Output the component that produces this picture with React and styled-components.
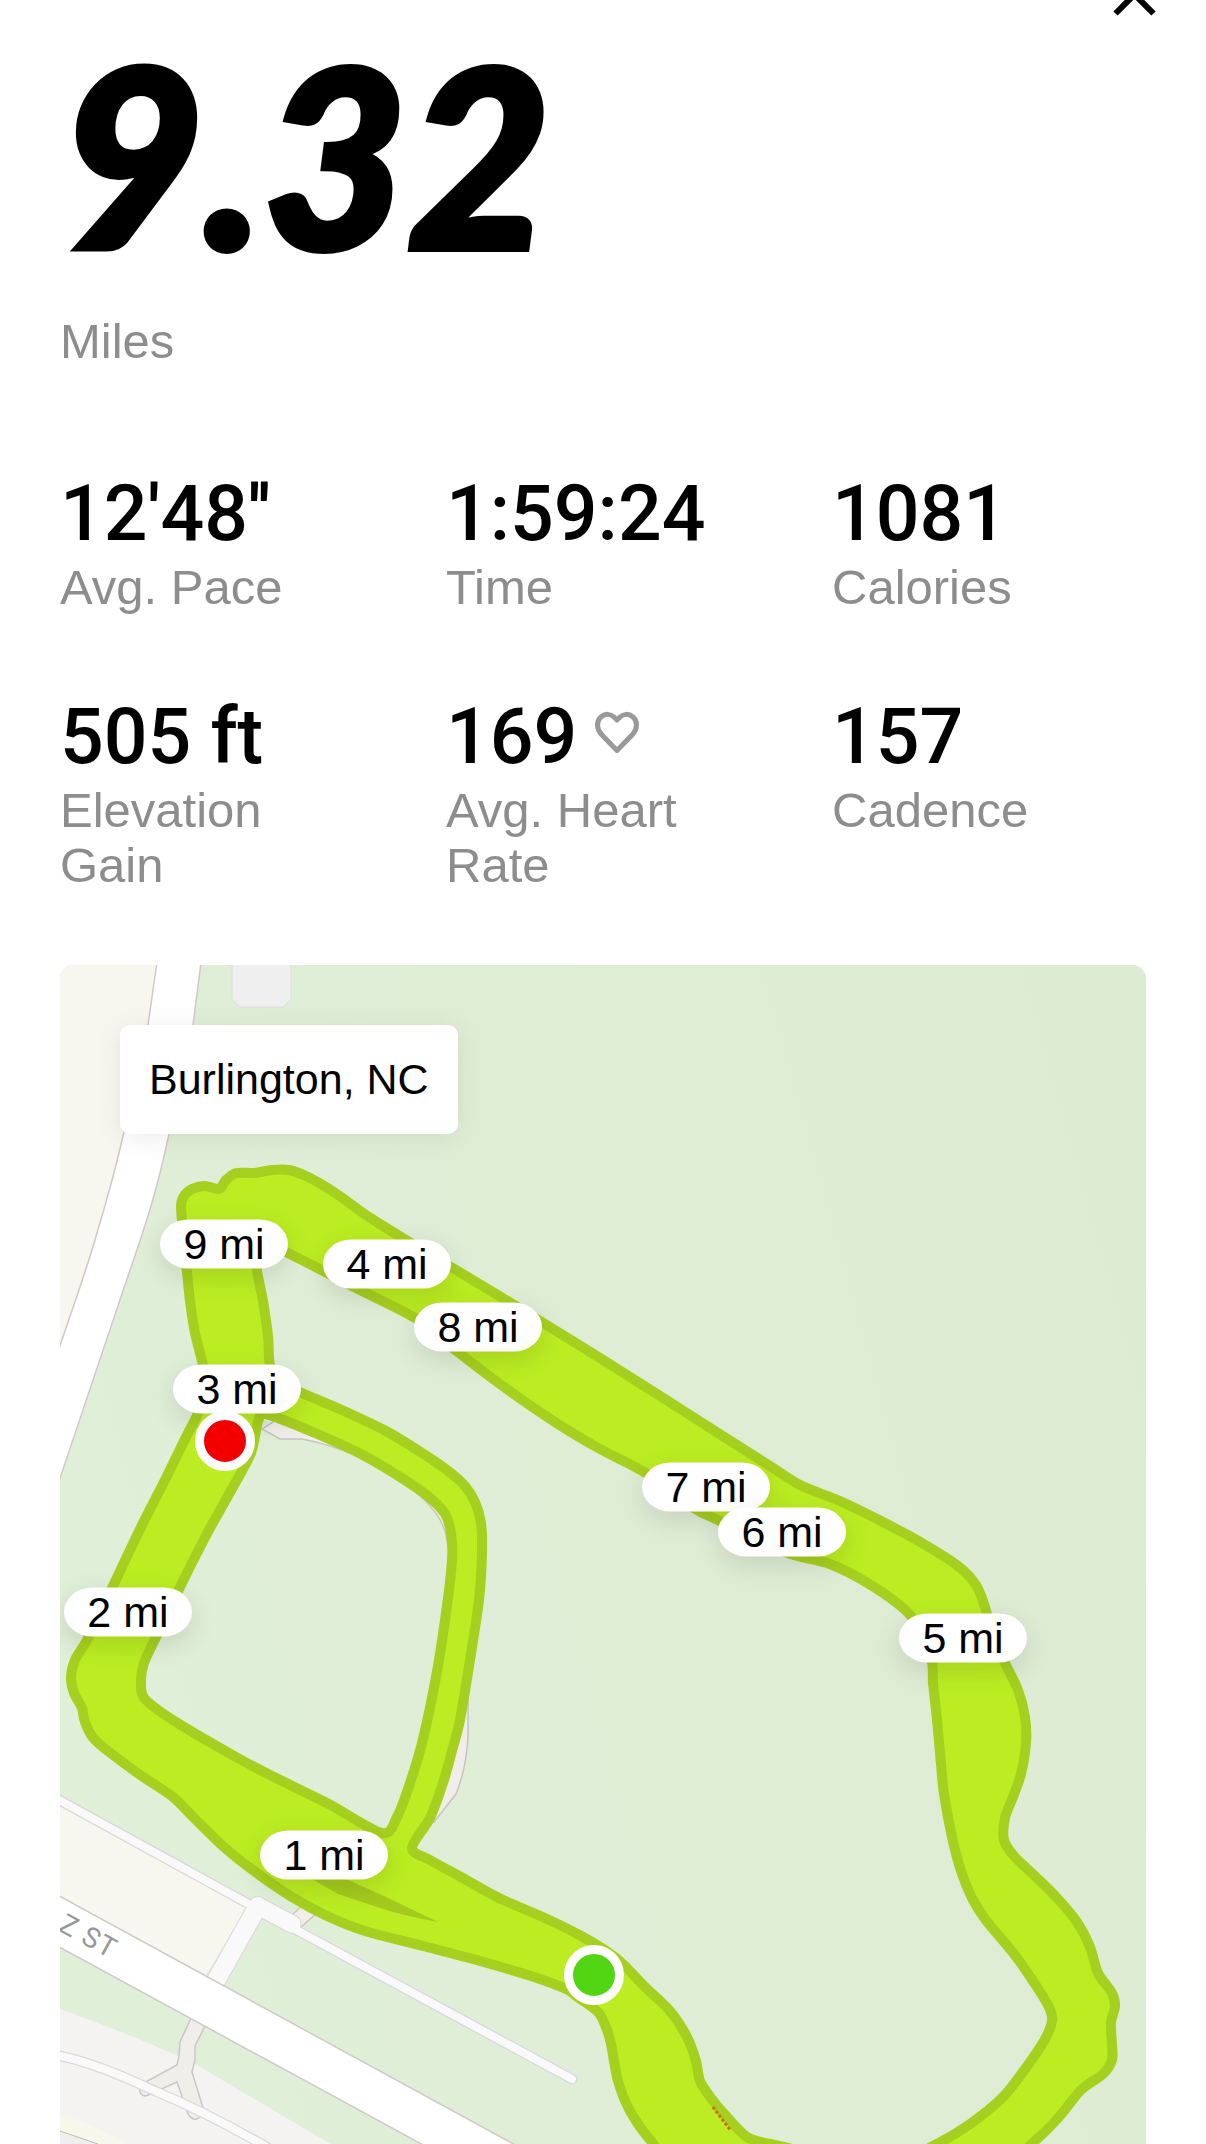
import React from "react";
import styled, { createGlobalStyle } from "styled-components";

const GlobalStyle = createGlobalStyle`
  *, *::before, *::after { box-sizing: border-box; }
  body {
    margin: 0;
    background: #fff;
    color: #000;
    font-family: "Liberation Sans", Helvetica, Arial, sans-serif;
    overflow-x: hidden;
  }
`;

const Page = styled.main`
  padding: 0 60px;
`;

const Header = styled.header`
  display: flex;
  justify-content: flex-end;
  align-items: flex-end;
  height: 24px;
  margin-right: -18px;
`;

const CloseButton = styled.button`
  flex: none;
  display: block;
  width: 60px;
  height: 60px;
  padding: 0;
  border: 0;
  background: none;
  color: #000;

  svg { display: block; }
`;

const Distance = styled.h1`
  margin: 0;
  font-family: Lato, "Liberation Sans", sans-serif;
  font-size: 248px;
  font-weight: 900;
  font-style: italic;
  line-height: 258px;
  -webkit-text-stroke: 6px #000;
`;

const Unit = styled.p`
  margin: 32px 0 0;
  font-size: 49px;
  line-height: 55px;
  color: #8d8d8d;
`;

const Stats = styled.dl`
  display: grid;
  grid-template-columns: repeat(3, minmax(0, 1fr));
  gap: 80px 72px;
  margin: 103px 0 0;
`;

const Stat = styled.div`
  display: flex;
  flex-direction: column-reverse;
  justify-content: flex-end;
  gap: 4px;
`;

const StatLabel = styled.dt`
  font-size: 49px;
  line-height: 55px;
  color: #8d8d8d;
`;

const StatValue = styled.dd`
  display: flex;
  align-items: center;
  gap: 16px;
  margin: 0;
  font-family: Roboto, "Liberation Sans", sans-serif;
  font-size: 77px;
  font-weight: 500;
  line-height: 84px;
  white-space: nowrap;
`;

const MapCard = styled.section`
  position: relative;
  aspect-ratio: 1086 / 1179;
  margin-top: 72px;
  border-radius: 14px 14px 0 0;
  overflow: hidden;
  background: #e0eed7;
`;

const MapDrawing = styled.svg`
  display: block;
  width: 100%;
  height: 100%;
`;

const PlaceChip = styled.div`
  position: absolute;
  top: 60px;
  left: 60px;
  padding: 27px 29px;
  border-radius: 10px;
  background: #fff;
  box-shadow: 0 4px 28px rgba(0, 0, 0, 0.08);
  font-size: 43px;
  line-height: 55px;
`;

const Marker = styled.span`
  position: absolute;
  left: ${(p) => ((p.$x - 60) / 1086) * 100}%;
  top: ${(p) => ((p.$y - 965) / 1179) * 100}%;
  transform: translate(-50%, -50%);
`;

const MilePin = styled(Marker)`
  width: 128px;
  height: 49px;
  border-radius: 29px / 25px;
  background: #fff;
  box-shadow: 0 8px 28px rgba(0, 0, 0, 0.12);
  font-size: 43px;
  line-height: 49px;
  text-align: center;
  white-space: nowrap;
`;

const EndPoint = styled(Marker)`
  width: 60px;
  height: 60px;
  border: 9px solid #fff;
  border-radius: 50%;
  background: ${(p) => p.$color};
`;

const stats = [
  { label: "Avg. Pace", value: "12'48''" },
  { label: "Time", value: "1:59:24" },
  { label: "Calories", value: "1081" },
  { label: "Elevation Gain", value: "505 ft" },
  { label: "Avg. Heart Rate", value: "169", heart: true },
  { label: "Cadence", value: "157" },
];

const pins = [
  { mile: 9, x: 224, y: 1244 },
  { mile: 4, x: 387, y: 1264 },
  { mile: 8, x: 478, y: 1327 },
  { mile: 3, x: 237, y: 1389 },
  { mile: 2, x: 128, y: 1612 },
  { mile: 1, x: 324, y: 1855 },
  { mile: 7, x: 706, y: 1487 },
  { mile: 6, x: 782, y: 1532 },
  { mile: 5, x: 963, y: 1638 },
];

const outerEdge = [
  [181, 1207], [184, 1196], [192, 1189], [205, 1186], [219, 1189], [226, 1180], [236, 1173],
  [254, 1173], [272, 1170], [289, 1170], [306, 1176], [326, 1187], [344, 1199], [369, 1217],
  [406, 1240], [451, 1267], [501, 1297], [540, 1321], [600, 1358], [668, 1401], [718, 1433],
  [770, 1466], [800, 1485], [840, 1501], [881, 1521], [922, 1543], [958, 1566], [976, 1585],
  [985, 1607], [992, 1633], [1005, 1663], [1018, 1690], [1025, 1717], [1026, 1743],
  [1021, 1774], [1013, 1797], [1005, 1818], [1004, 1840], [1014, 1856], [1036, 1877],
  [1058, 1899], [1077, 1922], [1090, 1947], [1098, 1973], [1112, 1993], [1115, 2006],
  [1111, 2023], [1112, 2044], [1112, 2060], [1103, 2074], [1081, 2090], [1059, 2117],
  [1037, 2139], [1010, 2160], [940, 2190], [700, 2190], [652, 2142], [630, 2111], [618, 2081],
  [611, 2044], [607, 2030], [598, 2012], [576, 1996], [566, 1989], [534, 1977], [480, 1961],
  [423, 1946], [365, 1931], [327, 1916], [292, 1897], [254, 1871], [224, 1847], [193, 1817],
  [173, 1797], [136, 1772], [96, 1741], [85, 1722], [82, 1708], [74, 1693], [71, 1677],
  [75, 1660], [87, 1640], [105, 1603], [122, 1567], [143, 1523], [165, 1480], [186, 1437],
  [198, 1413], [206, 1385], [202, 1361], [195, 1333], [190, 1301], [187, 1272], [184, 1240],
];

const courseInterior = [
  [256, 1240], [257, 1270], [263, 1301], [268, 1336], [270, 1365], [280, 1382], [302, 1393],
  [344, 1411], [386, 1431], [419, 1451], [447, 1470], [465, 1486], [475, 1502], [481, 1523],
  [482, 1553], [479, 1600], [470, 1660], [460, 1720], [452, 1751], [443, 1783], [430, 1818],
  [412, 1848], [430, 1860], [461, 1877], [499, 1898], [545, 1918], [583, 1937], [612, 1955],
  [628, 1969], [644, 1986], [670, 2011], [687, 2037], [696, 2061], [700, 2081], [711, 2098],
  [726, 2116], [747, 2137], [770, 2144], [850, 2160], [900, 2160], [937, 2144], [970, 2124],
  [1003, 2097], [1025, 2069], [1044, 2041], [1052, 2021], [1049, 2007], [1033, 1981],
  [1014, 1954], [985, 1919], [972, 1898], [961, 1871], [952, 1837], [944, 1794], [941, 1764],
  [937, 1720], [933, 1683], [931, 1658], [911, 1616], [874, 1587], [830, 1564], [785, 1552],
  [718, 1520], [694, 1508], [644, 1472], [600, 1449], [558, 1424], [504, 1387], [454, 1349],
  [415, 1318], [354, 1287], [290, 1254],
];

const innerLoop = [
  [266, 1414], [258, 1422], [251, 1453], [233, 1487], [209, 1530], [183, 1581], [158, 1633],
  [144, 1663], [141, 1683], [145, 1699], [176, 1722], [236, 1757], [270, 1775], [327, 1803],
  [382, 1833], [397, 1817], [409, 1786], [422, 1743], [436, 1677], [446, 1613], [452, 1560],
  [451, 1533], [445, 1514], [429, 1497], [397, 1475], [361, 1454], [315, 1433],
];

// Closed Catmull-Rom spline through the points, written as cubic segments.
function smooth(points) {
  const n = points.length;
  const at = (i) => points[(i + n) % n];
  let d = `M${at(0)}`;
  for (let i = 0; i < n; i += 1) {
    const [a, b, c, e] = [at(i - 1), at(i), at(i + 1), at(i + 2)];
    const c1 = [b[0] + (c[0] - a[0]) / 7, b[1] + (c[1] - a[1]) / 7];
    const c2 = [c[0] - (e[0] - b[0]) / 7, c[1] - (e[1] - b[1]) / 7];
    d += `C${c1} ${c2} ${c}`;
  }
  return `${d}Z`;
}

const routePath = smooth(outerEdge) + smooth(courseInterior) + smooth(innerLoop);

function CloseIcon() {
  return (
    <svg width="60" height="60" viewBox="0 0 60 60" fill="none" stroke="currentColor" strokeWidth="6" aria-hidden="true">
      <path d="M11.5 11.5 49.5 49.5M49.5 11.5 11.5 49.5" />
    </svg>
  );
}

function HeartIcon() {
  return (
    <svg width="48" height="48" viewBox="0 5 48 48" fill="none" stroke="#999" strokeWidth="5" strokeLinejoin="round" overflow="visible" aria-hidden="true">
      <path d="M24 42.500 8.500 26.500C3 20.500 3.500 12.500 8 9C12.500 5.200 17.500 5.800 21 9L24 12L27 9C30.500 5.800 35.500 5.200 40 9C44.500 12.500 45 20.500 39.500 26.500Z" />
    </svg>
  );
}

function CourseMap() {
  return (
    <MapDrawing viewBox="60 965 1086 1179" preserveAspectRatio="xMidYMin slice" role="img" aria-label="Route map">
      <defs>
        <linearGradient id="park" x1="0" y1="0.5" x2="1" y2="0.2">
          <stop offset="0" stopColor="#e0efd8" />
          <stop offset="1" stopColor="#deebd3" />
        </linearGradient>
      </defs>
      <rect x="60" y="965" width="1086" height="1179" fill="url(#park)" />

      {/* western road and the block beside it */}
      <path d="M60 965H157L148 1025L124 1132Q113 1176 97 1233L60 1346Z" fill="#f7f7ef" />
      <path
        d="M158 955L148 1025Q140 1070 124 1132Q113 1180 97 1233Q88 1266 50 1374V1508L128 1276Q142 1236 151 1206Q161 1172 169 1134Q184 1075 193 1025L202 955Z"
        fill="#fff" stroke="#cfcac6" strokeWidth="1.500"
      />
      <path d="M232 955V999L240 1007H283L291 999V955Z" fill="#efefef" stroke="#dededb" strokeWidth="1" />

      {/* footpath around the inner loop */}
      <path
        d="M262 1429L280 1439H302Q360 1450 408 1486Q441 1511 446 1535L468 1650V1737Q466 1770 456 1794L434 1822L400 1830L440 1760L468 1560L450 1480L300 1405Z"
        fill="#f1eeea" stroke="#c9c3c1" strokeWidth="1.500"
      />

      {/* blocks south of the course */}
      <path d="M60 1804L248 1906L206 1975L60 1897Z" fill="#f7f7ef" />
      <path d="M60 2009Q120 2030 178 2056L200 2067L346 2153H60Z" fill="#f4f3f2" />
      <path d="M60 2114Q100 2126 136 2150H60Z" fill="#f7f7ec" />
      <path d="M60 2131L98 2144V2150H55Z" fill="#efefee" stroke="#bbb" strokeWidth="1" />

      {/* paths */}
      <path
        d="M191 2018L180 2042L179 2056L177 2065L140 2085Q138 2096 146 2096L177 2082L188 2114Q196 2126 204 2111L192 2072L195 2060V2046L206 2024Z"
        fill="#efeee9" stroke="#cbc6c2" strokeWidth="1.500"
      />
      <path d="M292 1915L330 1880L340 1892L300 1928Z" fill="#f1eeea" stroke="#cbc6c2" strokeWidth="1.500" />
      <g fill="none" strokeLinecap="round" strokeLinejoin="round">
        <g stroke="#d9d7da" strokeWidth="10.500">
          <path d="M50 1795L254 1907L572 2079" />
          <path d="M50 2054Q90 2060 155 2091Q208 2113 270 2149" />
        </g>
        <path d="M260 1907 292 1924" stroke="#d9d7da" strokeWidth="19" />
        <path d="M258 1906 213 1986" stroke="#d9d7da" strokeWidth="20" />
        <path d="M260 1907 292 1924" stroke="#f9f9fa" strokeWidth="17" />
        <path d="M258 1906 213 1986" stroke="#f9f9fa" strokeWidth="18" />
        <g stroke="#f9f9fa" strokeWidth="8">
          <path d="M50 1795L254 1907L572 2079" />
          <path d="M50 2054Q90 2060 155 2091Q208 2113 270 2149" />
        </g>
      </g>
      <path d="M50 1891L530 2153H438L50 1942Z" fill="#fff" stroke="#cfcac6" strokeWidth="1.500" />
      <text
        transform="translate(57 1930) rotate(28.500)"
        fontFamily="Roboto, sans-serif" fontSize="28" letterSpacing="1" fill="#989898"
      >
        Z ST
      </text>

      {/* recorded route */}
      <path d={routePath} fill="#bbed22" fillRule="evenodd" stroke="#a6d01f" strokeWidth="10" strokeLinejoin="round" />
      <path d="M300 1872L346 1879L384 1896L438 1922Q400 1915 377 1907L338 1894Z" fill="#a3cb1d" />
      <path d="M713 2107 731 2131" stroke="#d9641e" strokeWidth="3" strokeDasharray="3 2" />
    </MapDrawing>
  );
}

export default function App() {
  return (
    <>
      <GlobalStyle />
      <Page>
        <Header>
          <CloseButton type="button" aria-label="Close">
            <CloseIcon />
          </CloseButton>
        </Header>
        <Distance>9.32</Distance>
        <Unit>Miles</Unit>
        <Stats>
          {stats.map(({ label, value, heart }) => (
            <Stat key={label}>
              <StatLabel>{label}</StatLabel>
              <StatValue>
                {value}
                {heart && <HeartIcon />}
              </StatValue>
            </Stat>
          ))}
        </Stats>
        <MapCard>
          <CourseMap />
          <PlaceChip>Burlington, NC</PlaceChip>
          {pins.map(({ mile, x, y }) => (
            <MilePin key={mile} $x={x} $y={y}>{mile} mi</MilePin>
          ))}
          <EndPoint $x={225} $y={1441} $color="#f20000" />
          <EndPoint $x={594} $y={1975} $color="#52d614" />
        </MapCard>
      </Page>
    </>
  );
}
